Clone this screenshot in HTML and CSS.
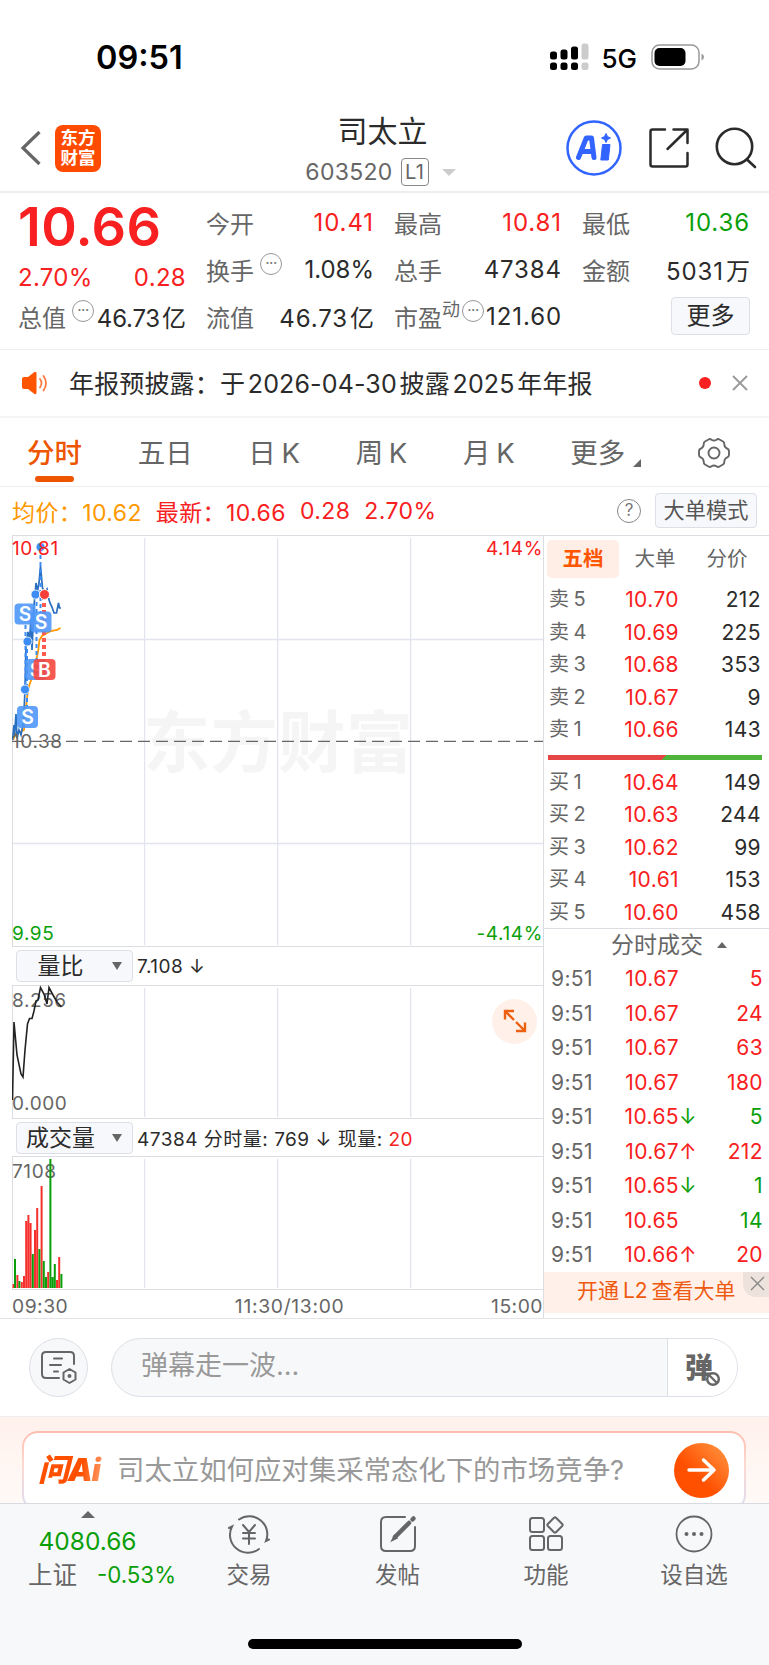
FILE: index.html
```html
<!DOCTYPE html>
<html lang="zh-CN">
<head>
    <meta charset="UTF-8">
    <meta name="viewport" content="width=device-width, initial-scale=1.0">
    <title>司太立 603520</title>
    <link rel="stylesheet" href="styles.css">
</head>
<body>
    <div class="status-bar">
        <span class="clock">09:51</span>
        <div class="status-right">
            <svg width="39" height="28" viewBox="0 0 39 28">
                <g fill="#000">
                    <rect x="0" y="8.500" width="7" height="8" rx="2.500"/><rect x="10.500" y="6.500" width="7" height="10" rx="2.500"/><rect x="21" y="3.500" width="7" height="13" rx="2.500"/>
                    <rect x="0" y="19.500" width="7" height="7.500" rx="2.500"/><rect x="10.500" y="19.500" width="7" height="7.500" rx="2.500"/><rect x="21" y="19.500" width="7" height="7.500" rx="2.500"/>
                </g>
                <g fill="#ccc"><rect x="31.500" y="0.500" width="7" height="16" rx="2.500"/><rect x="31.500" y="19.500" width="7" height="7.500" rx="2.500"/></g>
            </svg>
            <span class="network">5G</span>
            <svg class="battery" width="54" height="26" viewBox="0 0 54 26">
                <rect x="1" y="1" width="47" height="24" rx="7.500" fill="none" stroke="#999" stroke-width="1.500"/>
                <rect x="3.500" y="4" width="31" height="18" rx="5" fill="#000"/>
                <path d="M50.500 9.500q2.500 1 2.500 3.500t-2.500 3.500z" fill="#999"/>
            </svg>
        </div>
    </div>

    <div class="header">
        <div class="header-left">
            <svg width="22" height="36" viewBox="0 0 22 36" fill="none" stroke="#666" stroke-width="3.200"><path d="M19.500 2L3 18l16.500 16"/></svg>
            <div class="app-logo"><span>东方</span><span>财富</span></div>
        </div>
        <div class="stock">
            <div class="stock-name">司太立</div>
            <div class="stock-code">603520<span class="level">L1</span><i class="tri-down"></i></div>
        </div>
        <div class="header-right">
            <svg width="56" height="56" viewBox="0 0 56 56">
                <circle cx="28" cy="28" r="26.500" fill="none" stroke="#3264ff" stroke-width="2.500"/>
                <path d="M12.500 37.500L20.300 18h5.200l2.500 19.500M17.500 31.500h8" fill="none" stroke="#3264ff" stroke-linejoin="round" stroke-linecap="round" stroke-width="5"/>
                <path d="M36.500 24.500h7.500l-1.700 15.500h-7.500z" fill="#3264ff" stroke="#3264ff" stroke-linejoin="round"/>
                <path d="M40 13.500l1.500 3 3 1.500-3 1.500-1.500 3-1.500-3-3-1.500 3-1.500z" fill="#3264ff" stroke="#3264ff"/>
            </svg>
            <svg class="share" width="42" height="42" viewBox="0 0 42 42" fill="none" stroke="#2b2b2b" stroke-width="2.500" stroke-linecap="round" stroke-linejoin="round">
                <path d="M17 2.500H4.500q-2 0-2 2v33q0 2 2 2h33q2 0 2-2V26M25.500 2.500h14v13.500M39 3L19.500 22"/>
            </svg>
            <svg width="42" height="42" viewBox="0 0 42 42" fill="none" stroke="#2b2b2b" stroke-width="2.600" stroke-linecap="round">
                <circle cx="19.500" cy="19.500" r="17.700"/><path d="M32 32.500l8 7.500"/>
            </svg>
        </div>
    </div>

    <div class="quote">
        <div class="price-box">
            <div class="price">10.66</div>
            <div class="change"><span>2.70%</span><span>0.28</span></div>
        </div>
        <div class="item"><span class="label">今开</span><span class="num red">10.41</span></div>
        <div class="item"><span class="label">最高</span><span class="num red">10.81</span></div>
        <div class="item"><span class="label">最低</span><span class="num green">10.36</span></div>
        <div class="item"><span class="label">换手<i class="dots">···</i></span><span>1.08%</span></div>
        <div class="item"><span class="label">总手</span><span class="num">47384</span></div>
        <div class="item"><span class="label">金额</span><span class="num">5031<b>万</b></span></div>
        <div class="item"><span class="label">总值<i class="dots">···</i></span><span class="narrow">46.73<b>亿</b></span></div>
        <div class="item"><span class="label">流值</span><span class="num">46.73<b>亿</b></span></div>
        <div class="item"><span class="label">市盈<sup>动</sup><i class="dots tight">···</i></span><span class="num">121.60</span></div>
        <div class="item more-cell"><button class="more">更多</button></div>
    </div>

    <div class="notice">
        <svg width="28" height="24" viewBox="0 0 28 24">
            <path d="M1 8q0-2 2-2h4l6.500-5q2-1 2 1.500v19q0 2.500-2 1.500L7 18H3q-2 0-2-2z" fill="#ff5500"/>
            <path d="M19 8q3 4 0 8.500M22.500 5q5 7 0 14.500" fill="none" stroke="#ff7a3d" stroke-width="1.800" stroke-linecap="round"/>
        </svg>
        <span class="notice-text">年报预披露：于 2026-04-30 披露 2025 年年报</span>
        <i class="red-dot"></i>
        <svg width="16" height="16" viewBox="0 0 16 16" stroke="#999" stroke-width="1.800"><path d="M1 1l14 14M15 1L1 15"/></svg>
    </div>

    <div class="tabs">
        <span class="tab active">分时</span>
        <span class="tab">五日</span>
        <span class="tab">日 K</span>
        <span class="tab">周 K</span>
        <span class="tab">月 K</span>
        <span class="tab tab-more">更多</span>
        <svg width="34" height="32" viewBox="0 0 34 32" fill="none" stroke="#666" stroke-width="1.900" stroke-linejoin="round">
            <path d="M11.500 2.500q1.500-1 3 .2 2.500 1.600 5 0 1.500-1.200 3-.2l3.500 2q1.500 1 1.300 2.800 0 3 2.700 4.200 2 .8 2 2.500v4q0 1.700-2 2.500-2.700 1.200-2.700 4.200.2 1.800-1.300 2.800l-3.500 2q-1.500 1-3-.2-2.500-1.600-5 0-1.500 1.200-3 .2l-3.500-2q-1.500-1-1.300-2.800 0-3-2.700-4.200-2-.8-2-2.500v-4q0-1.700 2-2.500 2.700-1.200 2.700-4.200-.2-1.800 1.300-2.800z"/>
            <circle cx="17" cy="16" r="5.500"/>
        </svg>
    </div>

    <div class="info-row">
        <span class="avg">均价：10.62</span>
        <span class="red">最新：10.66</span>
        <span class="red">0.28</span>
        <span class="red">2.70%</span>
        <span class="help">?</span>
        <button class="mode">大单模式</button>
    </div>

    <div class="market">
        <div class="charts">
            <svg class="chart" width="531" height="412" viewBox="12 535 531 412">
                <text class="watermark" x="143" y="767" textLength="270">东方财富</text>
                <path class="grid" d="M144.600 538V945M277.600 538V945M410.600 538V945M12 639.500H544M12 843.500H544"/>
                <path class="frame" d="M12.500 535V947M12 535.500H544M12 946.500H544"/>
                <path d="M12 741.300H544" stroke="#666" stroke-width="1.300" stroke-dasharray="12 6"/>
                <path class="avg-line" d="M13 740L16 733L20 732L24 730L25.500 712L28 690L30 683L33 676L36 661L38 652L39.500 640L42 636L47 633L51 631L57 630L60.500 628"/>
                <path class="price-line" d="M12.500 740L14 725L14.500 735L16 714L17 738L19 730L21 735L23.500 722L25 690L26 644L28 632L29.500 640L31 618L32 650L34 606L36 583L37.500 591L39 583L40.500 566L42.500 588L44.500 592L47 589L48.500 598L50 603L52 607L54 613H56.500L58.500 603L59.500 608H61"/>
                <path class="sell-guide" d="M25.500 625V690M36.500 595V660M40.500 548V613M27 642V707"/>
                <path d="M44 596V660" stroke="#ff5a4f" stroke-width="4" stroke-dasharray="4 3"/>
                <g class="sell-dot">
                    <circle cx="40.500" cy="547" r="4.500"/><circle cx="35.500" cy="594.500" r="4.500"/><circle cx="27.500" cy="641.500" r="4.500"/><circle cx="25" cy="689.500" r="4.500"/>
                </g>
                <circle cx="44.500" cy="594.500" r="5" fill="#f5403a" stroke="#fff"/>
                <g class="mark">
                    <rect x="14.500" y="603.500" width="21" height="21" rx="4"/><text x="25" y="621">S</text>
                    <rect x="30.500" y="611.500" width="21" height="21" rx="4"/><text x="41" y="629">S</text>
                    <rect x="25.500" y="659" width="21" height="21" rx="4"/><text x="36" y="676.500">S</text>
                    <rect x="17" y="706" width="21" height="22" rx="4"/><text x="27.500" y="724">S</text>
                    <rect class="buy" x="33.500" y="659" width="22" height="21" rx="4"/><text x="44.500" y="676.500">B</text>
                </g>
                <text class="red-t" x="12" y="554.500">10.81</text>
                <text class="red-t end" x="543" y="554.500">4.14%</text>
                <text x="12" y="747.500">10.38</text>
                <text class="green-t" x="12" y="939.500">9.95</text>
                <text class="green-t end" x="543" y="939.500">-4.14%</text>
            </svg>
            <div class="indicator">
                <button class="picker"><span>量比</span><i class="tri-dark"></i></button>
                <span>7.108 ↓</span>
            </div>
            <div class="sub-chart">
                <svg class="chart" width="531" height="134" viewBox="12 985 531 134">
                    <path class="grid" d="M144.600 988V1117M277.600 988V1117M410.600 988V1117"/>
                    <path class="frame" d="M12.500 985V1119M12 985.500H544M12 1118.500H544"/>
                    <text x="12" y="1006.500">8.256</text>
                    <text x="12" y="1110">0.000</text>
                    <path class="ratio-line" d="M12.500 1100L14 1022L17 1055L21 1074L23 1077L25 1050L27.500 1024L29.500 1018.500H32L34 1011L36 1001L38 1000L40.500 987.500L44 994L47 1004L49 987.500L53 995L57 1002L61.500 1007"/>
                </svg>
                <div class="expand">
                    <svg width="24" height="24" viewBox="0 0 24 24" fill="none" stroke="#ee6010" stroke-width="2.400"><path d="M2 10.500V2h9M2 2l9 9M22 13.500V22h-9M22 22l-9-9"/></svg>
                </div>
            </div>
            <div class="indicator">
                <button class="picker"><span>成交量</span><i class="tri-dark"></i></button>
                <span>47384 分时量: 769 ↓ 现量: <em class="red">20</em></span>
            </div>
            <svg class="chart" width="531" height="134" viewBox="12 1156 531 134">
                <path class="grid" d="M144.600 1159V1288M277.600 1159V1288M410.600 1159V1288"/>
                <path class="frame" d="M12.500 1156V1290M12 1156.500H544M12 1289.500H544"/>
                <text x="12" y="1178">7108</text>
                <!-- one bar per minute, 2.2 apart -->
                <path class="vol-up" d="M13.500 1288v-4M17.400 1288v-13M21.800 1288v-6M24 1288v-12M26.200 1288v-67M28.400 1288v-73M30.600 1288v-65M35 1288v-58M37.200 1288v-80M41.600 1288v-102M48.200 1288v-16M57 1288v-8M59.200 1288v-31"/>
                <path class="vol-down" d="M15 1288v-29M19.400 1288v-7M32.800 1288v-34M39.400 1288v-39M43.800 1288v-27M46 1288v-11M50.400 1288v-129M52.600 1288v-11M54.800 1288v-24M61.400 1288v-14"/>
            </svg>
            <div class="time-axis"><span>09:30</span><span>11:30/13:00</span><span>15:00</span></div>
        </div>

        <div class="depth">
            <div class="depth-tabs"><span class="on">五档</span><span>大单</span><span>分价</span></div>
            <div class="levels">
                <div class="level-row"><span>卖 5</span><span class="red">10.70</span><span>212</span></div>
                <div class="level-row"><span>卖 4</span><span class="red">10.69</span><span>225</span></div>
                <div class="level-row"><span>卖 3</span><span class="red">10.68</span><span>353</span></div>
                <div class="level-row"><span>卖 2</span><span class="red">10.67</span><span>9</span></div>
                <div class="level-row"><span>卖 1</span><span class="red">10.66</span><span>143</span></div>
            </div>
            <div class="ratio-bar"></div>
            <div class="levels">
                <div class="level-row"><span>买 1</span><span class="red">10.64</span><span>149</span></div>
                <div class="level-row"><span>买 2</span><span class="red">10.63</span><span>244</span></div>
                <div class="level-row"><span>买 3</span><span class="red">10.62</span><span>99</span></div>
                <div class="level-row"><span>买 4</span><span class="red">10.61</span><span>153</span></div>
                <div class="level-row"><span>买 5</span><span class="red">10.60</span><span>458</span></div>
            </div>
            <div class="ticks-title">分时成交<i class="tri-up"></i></div>
            <div class="ticks">
                <div class="tick"><span>9:51</span><span class="red">10.67</span><i></i><span class="red">5</span></div>
                <div class="tick"><span>9:51</span><span class="red">10.67</span><i></i><span class="red">24</span></div>
                <div class="tick"><span>9:51</span><span class="red">10.67</span><i></i><span class="red">63</span></div>
                <div class="tick"><span>9:51</span><span class="red">10.67</span><i></i><span class="red">180</span></div>
                <div class="tick"><span>9:51</span><span class="red">10.65</span><i class="green">↓</i><span class="green">5</span></div>
                <div class="tick"><span>9:51</span><span class="red">10.67</span><i class="red">↑</i><span class="red">212</span></div>
                <div class="tick"><span>9:51</span><span class="red">10.65</span><i class="green">↓</i><span class="green">1</span></div>
                <div class="tick"><span>9:51</span><span class="red">10.65</span><i></i><span class="green">14</span></div>
                <div class="tick"><span>9:51</span><span class="red">10.66</span><i class="red">↑</i><span class="red">20</span></div>
            </div>
            <div class="l2-banner">
                开通 L2 查看大单
                <div class="l2-close"><svg width="15" height="15" viewBox="0 0 15 15" stroke="#888" stroke-width="1.400"><path d="M1 1l13 13M14 1L1 14"/></svg></div>
            </div>
        </div>
    </div>

    <div class="danmu">
        <div class="round-btn">
            <svg width="36" height="34" viewBox="0 0 36 34" fill="none" stroke="#666" stroke-width="2" stroke-linecap="round" stroke-linejoin="round">
                <path d="M18 27H5q-4 0-4-4V5q0-4 4-4h24q4 0 4 4v8M13 7.500h8M9 14h11M13 20.500h4"/>
                <path d="M28.500 18l6 3.500v7l-6 3.500-6-3.500v-7z"/><circle cx="28.500" cy="25" r="1" fill="#666"/>
            </svg>
        </div>
        <div class="danmu-input">
            <span class="placeholder">弹幕走一波...</span>
            <div class="danmu-switch">
                <span>弹</span>
                <svg width="16" height="16" viewBox="0 0 16 16"><circle cx="8" cy="8" r="5.800" fill="#fff" stroke="#666" stroke-width="2.500"/><path d="M4 4l8 8" stroke="#666" stroke-width="2.300"/></svg>
            </div>
        </div>
    </div>

    <div class="ai-section">
        <div class="ai-card">
            <span class="ai-logo">问Ai</span>
            <span class="ai-question">司太立如何应对集采常态化下的市场竞争?</span>
            <div class="ai-go">
                <svg width="30" height="26" viewBox="0 0 30 26" fill="none" stroke="#fff" stroke-width="3.500" stroke-linecap="round" stroke-linejoin="round"><path d="M2 13h25M16.500 3L27 13 16.500 23"/></svg>
            </div>
        </div>
    </div>

    <div class="bottom-bar">
        <div class="index">
            <i class="tri-up big"></i>
            <div class="index-value">4080.66</div>
            <div class="index-row"><span>上证</span><span class="green">-0.53%</span></div>
        </div>
        <div class="nav">
            <svg width="44" height="40" viewBox="0 0 44 40" fill="none" stroke="#666" stroke-width="2" stroke-linecap="round">
                <path d="M12 5.500A18 18 0 0 1 39 27l3-1.500M32 35A18 18 0 0 1 5 12.500L2 14"/>
                <path d="M16 11l6 7 6-7M22 18v12M16 19h12M16 24.500h12"/>
            </svg>
            <span>交易</span>
        </div>
        <div class="nav">
            <svg width="40" height="40" viewBox="0 0 40 40" fill="none" stroke="#666" stroke-width="2" stroke-linecap="round">
                <path d="M27 3H8q-5 0-5 5v24q0 5 5 5h24q5 0 5-5V13"/>
                <path d="M17 23L31 9" stroke-width="4.500"/><path d="M14.500 26l2-4 2 2z" fill="#666"/><path d="M34.500 5.500l1-1" stroke-width="4.500"/>
            </svg>
            <span>发帖</span>
        </div>
        <div class="nav">
            <svg width="38" height="40" viewBox="0 0 38 40" fill="none" stroke="#666" stroke-width="2" stroke-linejoin="round">
                <rect x="3" y="4" width="14" height="14" rx="2.500"/><rect x="3" y="22" width="14" height="14" rx="2.500"/><rect x="21" y="22" width="14" height="14" rx="2.500"/>
                <path d="M27 3.800q1-.9 2 0l6.200 6.200q.9 1 0 2L29 18.200q-1 .9-2 0L20.800 12q-.9-1 0-2z"/>
            </svg>
            <span>功能</span>
        </div>
        <div class="nav">
            <svg width="40" height="40" viewBox="0 0 40 40">
                <circle cx="20" cy="20" r="17.500" fill="none" stroke="#666" stroke-width="1.800"/>
                <g fill="#666"><circle cx="12.500" cy="20" r="2"/><circle cx="20" cy="20" r="2"/><circle cx="27.500" cy="20" r="2"/></g>
            </svg>
            <span>设自选</span>
        </div>
    </div>
    <div class="home-area"><div class="home-indicator"></div></div>
</body>
</html>
```
FILE: styles.css
```css
* {
    box-sizing: border-box;
}

body {
    margin: 0;
    width: 769px;
    background-color: #fff;
    color: #2b2b2b;
    font-family: Inter, "Noto Sans CJK SC", sans-serif;
    overflow-x: hidden;
}

i, em, b {
    font-style: normal;
    font-weight: normal;
}

svg {
    display: block;
    flex-shrink: 0;
}

button {
    font-family: inherit;
    color: #2b2b2b;
    background-color: #f7f8fb;
    border: 1px solid #dcdfe6;
    border-radius: 4px;
    padding: 0;
}

.red { color: #f82020; }
.green { color: #0a9f0a; }

/* status bar */
.status-bar {
    height: 104px;
    padding: 42px 64px 0 96px;
    display: flex;
    justify-content: space-between;
}

.clock {
    font-size: 32.500px;
    font-weight: 600;
    line-height: 31px;
    color: #000;
}

.status-right {
    display: flex;
    height: 30px;
    align-items: center;
    color: #000;
}

.network {
    font-size: 26px;
    font-weight: 500;
    margin: 2px 14px 0 12px;
}

/* header */
.header {
    height: 89px;
    padding: 0 12px 0 20px;
    border-bottom: 2px solid #eee;
    display: grid;
    grid-template-columns: 1fr 200px 1fr;
}

.header-left, .header-right {
    display: flex;
    align-items: center;
    padding-top: 1px;
}

.header-right {
    justify-content: flex-end;
}

.app-logo {
    margin-left: 13px;
    width: 46px;
    height: 47px;
    border-radius: 8px;
    background-color: #ff4b00;
    color: #fff;
    font-size: 17.500px;
    font-weight: 700;
    line-height: 20px;
    display: flex;
    flex-direction: column;
    align-items: center;
    justify-content: center;
}

.share {
    margin: 0 25px 0 26px;
}

.stock {
    text-align: center;
    margin-left: -6px;
    margin-right: 6px;
}

.stock-name {
    font-size: 30px;
    line-height: 36px;
    margin-top: 9px;
}

.stock-code {
    display: flex;
    align-items: center;
    justify-content: center;
    height: 32px;
    margin: 7px 4px 0 0;
    font-size: 23px;
    letter-spacing: 0.300px;
    color: #666;
}

.level {
    border: 1.500px solid #888;
    border-radius: 4px;
    width: 28px;
    height: 28px;
    line-height: 26px;
    font-size: 20px;
    margin-left: 8px;
}

.tri-down {
    border: 7px solid transparent;
    border-top-color: #ccc;
    border-bottom: 0;
    margin-left: 13px;
}

/* quote summary */
.quote {
    height: 156px;
    padding: 6px 19px 0 18px;
    display: grid;
    grid-template-columns: repeat(4, 168px);
    grid-template-rows: repeat(3, 47px);
    justify-content: space-between;
    font-size: 24px;
}

.price-box {
    grid-row: span 2;
    color: #f82020;
}

.price {
    font-size: 54px;
    font-weight: 600;
    line-height: 55px;
    height: 61px;
    letter-spacing: 0.300px;
}

.change {
    display: flex;
    justify-content: space-between;
    line-height: 36px;
    letter-spacing: 0.300px;
}

.item {
    display: flex;
    justify-content: space-between;
    align-items: center;
    white-space: nowrap;
}

.num {
    letter-spacing: 0.900px;
}

.narrow {
    letter-spacing: -0.200px;
}

.label {
    color: #666;
    display: flex;
    align-items: center;
}

.item b {
    margin-left: 2px;
    letter-spacing: 0;
}

.item sup {
    font-size: 18px;
    line-height: 18px;
    margin-bottom: 14px;
}

.dots {
    width: 22px;
    height: 22px;
    border: 1.500px solid #999;
    border-radius: 50%;
    font-size: 15px;
    line-height: 18px;
    text-align: center;
    letter-spacing: -0.500px;
    color: #777;
    margin: 0 0 12px 6px;
}

.tight {
    margin-left: 2px;
}

.more-cell {
    justify-content: flex-end;
}

.more {
    width: 79px;
    height: 38px;
    font-size: 24px;
    line-height: 32px;
    margin-bottom: 2px;
}

/* notice */
.notice {
    height: 69px;
    padding: 0 21px;
    border-top: 1px solid #eee;
    border-bottom: 2px solid #f5f5f5;
    display: flex;
    align-items: center;
}

.notice-text {
    flex: 1;
    margin-left: 20px;
    padding-bottom: 2px;
    font-size: 25px;
    letter-spacing: 0.150px;
    word-spacing: -4.500px;
}

.red-dot {
    width: 12px;
    height: 12px;
    border-radius: 50%;
    background-color: #f82020;
    margin-right: 21px;
}

/* period tabs */
.tabs {
    height: 69px;
    padding: 1px 38px 0 27px;
    border-bottom: 1px solid #eee;
    display: flex;
    justify-content: space-between;
    align-items: center;
}

.tab {
    position: relative;
    font-size: 27.500px;
    line-height: 40px;
    color: #666;
    word-spacing: -2px;
}

.active {
    color: #ee5500;
    font-weight: 500;
}

.active::after {
    content: "";
    position: absolute;
    left: 8px;
    bottom: -9px;
    width: 39px;
    height: 6px;
    border-radius: 3px;
    background-color: #ee5500;
}

.tab-more {
    padding-right: 16px;
}

.tab-more::after {
    content: "";
    position: absolute;
    right: 0;
    bottom: 6px;
    border-left: 8px solid transparent;
    border-bottom: 8px solid #666;
}

.info-row {
    height: 48px;
    padding: 0 12px 1px;
    display: flex;
    align-items: center;
    gap: 14px;
    font-size: 23px;
    letter-spacing: 0.400px;
}

.avg {
    color: #ff9900;
}

.help {
    margin-left: auto;
    width: 24px;
    height: 24px;
    border: 1.500px solid #888;
    border-radius: 50%;
    font-size: 17px;
    line-height: 21px;
    letter-spacing: 0;
    text-align: center;
    color: #777;
}

.mode {
    width: 102px;
    height: 35px;
    font-size: 21.200px;
    line-height: 31px;
    color: #555;
}

/* charts and order book */
.market {
    display: flex;
    height: 784px;
    border-bottom: 1px solid #e4e4e8;
}

.charts {
    width: 531px;
    margin-left: 12px;
}

.chart text {
    font-size: 19px;
    letter-spacing: 0.600px;
    fill: #666;
}

.chart .red-t { fill: #f82020; }
.chart .green-t { fill: #0a9f0a; }
.chart .end { text-anchor: end; }

.chart .watermark {
    font-size: 67px;
    font-weight: 700;
    letter-spacing: 0;
    fill: #f5f5f6;
}

.grid {
    fill: none;
    stroke: #e2e4ee;
    stroke-width: 1.300;
}

.frame {
    fill: none;
    stroke: #dcdde3;
}

.avg-line {
    fill: none;
    stroke: #ff9900;
    stroke-width: 1.800;
}

.price-line {
    fill: none;
    stroke: #2a6fc0;
    stroke-width: 1.700;
}

.ratio-line {
    fill: none;
    stroke: #222;
    stroke-width: 1.600;
}

.sell-guide {
    stroke: #3c8cf5;
    stroke-width: 2;
    stroke-dasharray: 4 3;
}

.sell-dot {
    fill: #3c8cf5;
    stroke: #fff;
    stroke-width: 0.800;
}

.mark rect {
    fill: #4f97f8;
    fill-opacity: 0.9;
}

.mark .buy {
    fill: #f5473f;
}

.chart .mark text {
    font-size: 19.500px;
    font-weight: 600;
    letter-spacing: 0;
    fill: #fff;
    text-anchor: middle;
}

.vol-up { stroke: #f5302d; stroke-width: 2; }
.vol-down { stroke: #0a9f0a; stroke-width: 2; }

.indicator {
    height: 37.500px;
    padding: 1px 0 0 4px;
    display: flex;
    align-items: center;
    gap: 4px;
    font-size: 19px;
    letter-spacing: 0.500px;
}

.picker {
    width: 117px;
    height: 32px;
    padding: 0 10px 0 2px;
    display: flex;
    align-items: center;
    font-size: 23px;
    line-height: 28px;
}

.picker span {
    flex: 1;
    text-align: center;
}

.tri-dark {
    border: 5px solid transparent;
    border-top: 8px solid #666;
    border-bottom: 0;
    margin-left: 10px;
}

.sub-chart {
    position: relative;
}

.expand {
    position: absolute;
    right: 6px;
    top: 14px;
    width: 45px;
    height: 45px;
    border-radius: 50%;
    background-color: #fff0e9;
    display: flex;
    align-items: center;
    justify-content: center;
}

.time-axis {
    display: flex;
    justify-content: space-between;
    font-size: 19.300px;
    line-height: 33px;
    letter-spacing: 0.500px;
    color: #666;
}

.time-axis span:nth-child(2) {
    padding-left: 20px;
    letter-spacing: 0.700px;
}

.depth {
    width: 226px;
    border-left: 1.500px solid #dcdde3;
    border-top: 1px solid #dcdde3;
}

.depth-tabs {
    display: flex;
    margin: 4px 0 5px 3px;
    font-size: 20.500px;
    line-height: 38px;
    color: #666;
}

.depth-tabs span {
    width: 72px;
    text-align: center;
}

.depth-tabs .on {
    border-radius: 5px;
    background-color: #ffeee6;
    color: #ff5500;
    font-weight: 700;
}

.level-row {
    display: grid;
    grid-template-columns: 51px 79px 82px;
    padding-left: 5px;
    height: 32.500px;
    line-height: 33.500px;
    font-size: 21px;
    letter-spacing: 0.400px;
    text-align: right;
}

.level-row span:first-child {
    text-align: left;
    color: #666;
    font-size: 20px;
    word-spacing: -2px;
}

.ratio-bar {
    height: 5px;
    margin: 9px 7px 6px 4px;
    background: linear-gradient(135deg, #e64545 54%, #4fb53a 54%);
}

.ticks-title {
    height: 33px;
    border-top: 1.500px solid #dcdde3;
    font-size: 23px;
    line-height: 30px;
    color: #666;
    display: flex;
    align-items: center;
    padding-left: 67px;
}

.tri-up {
    border: 5px solid transparent;
    border-bottom: 6px solid #666;
    border-top: 0;
    margin-left: 14px;
}

.tick {
    display: grid;
    grid-template-columns: 60px 70px 15px 69px;
    padding-left: 5px;
    height: 34.500px;
    line-height: 35px;
    font-size: 21px;
    letter-spacing: 0.400px;
    text-align: right;
}

.tick span:first-child {
    text-align: left;
    padding-left: 2px;
    color: #666;
}

.l2-banner {
    position: relative;
    height: 41px;
    background-color: #fff0e9;
    color: #ee5a10;
    font-size: 21px;
    line-height: 37px;
    padding-left: 33px;
    word-spacing: -2px;
}

.l2-close {
    position: absolute;
    right: 0;
    top: 0;
    width: 26px;
    height: 25px;
    padding: 4px 0 0 7px;
    border-bottom-left-radius: 13px;
    background-color: #ede2dc;
}

/* comment input */
.danmu {
    height: 97px;
    padding: 19px 31px 0 29px;
    display: flex;
    justify-content: space-between;
}

.round-btn {
    width: 59px;
    height: 59px;
    border: 1px solid #dcdfe6;
    border-radius: 50%;
    background-color: #f7f8fa;
    display: flex;
    align-items: center;
    justify-content: center;
}

.danmu-input {
    width: 627px;
    height: 59px;
    border: 1px solid #dcdfe6;
    border-radius: 30px;
    background-color: #f7f8fa;
    overflow: hidden;
    display: flex;
    justify-content: space-between;
}

.placeholder {
    font-size: 27px;
    line-height: 53px;
    padding-left: 29px;
    color: #999;
}

.danmu-switch {
    width: 70px;
    border-left: 1px solid #dcdfe6;
    background-color: #fff;
    color: #666;
    font-size: 28px;
    font-weight: 900;
    line-height: 54px;
    padding-left: 17px;
    display: flex;
    align-items: center;
}

.danmu-switch svg {
    margin: 22px 0 0 -8px;
}

/* ask AI */
.ai-section {
    height: 87px;
    padding: 14px 23px 0 22px;
    overflow: hidden;
    border-top: 1px solid #eee;
    background: linear-gradient(#fff1ec, #fffaf7);
}

.ai-card {
    height: 80px;
    border: 2px solid transparent;
    border-radius: 16px;
    background: linear-gradient(#fff, #fff) padding-box, linear-gradient(#ffbdb0, #ffd8d0 40%, #dcdcf2) border-box;
    display: flex;
    align-items: center;
    padding: 0 15px 2px 14px;
}

.ai-logo {
    width: 79px;
    font-size: 31px;
    font-weight: 900;
    font-style: italic;
    letter-spacing: -1px;
    line-height: 40px;
    background: linear-gradient(100deg, #ff5000 55%, #ff9a66 80%);
    -webkit-background-clip: text;
    background-clip: text;
    color: transparent;
}

.ai-question {
    flex: 1;
    font-size: 27.400px;
    line-height: 40px;
    white-space: nowrap;
    color: #999;
}

.ai-go {
    width: 55px;
    height: 55px;
    border-radius: 50%;
    background: linear-gradient(45deg, #ff5000 40%, #ff9a45);
    display: flex;
    align-items: center;
    justify-content: center;
}

/* bottom bar */
.bottom-bar {
    height: 105px;
    border-top: 1px solid #d8dae0;
    background-color: #f7f8fa;
    display: grid;
    grid-template-columns: 175px 148px 149px 148px 148px;
    color: #666;
}

.index {
    display: flex;
    flex-direction: column;
    align-items: center;
    padding-top: 7px;
}

.big {
    border-width: 0 7px 7px;
    margin-left: 0;
}

.index-value {
    font-size: 24.500px;
    line-height: 36px;
    margin-top: 5px;
    color: #0a9f0a;
}

.index-row {
    display: flex;
    gap: 20px;
    padding-left: 29px;
    font-size: 24.500px;
    line-height: 32px;
    white-space: nowrap;
}

.index-row .green {
    font-size: 22.300px;
}

.nav {
    display: flex;
    flex-direction: column;
    align-items: center;
    padding-top: 10px;
    font-size: 22.500px;
    line-height: 32px;
}

.nav span {
    margin-top: 5px;
}

.home-area {
    height: 57px;
    padding-top: 31px;
    background-color: #f7f8fa;
}

.home-indicator {
    width: 274px;
    height: 10px;
    margin: 0 auto;
    border-radius: 5px;
    background-color: #000;
}
```
